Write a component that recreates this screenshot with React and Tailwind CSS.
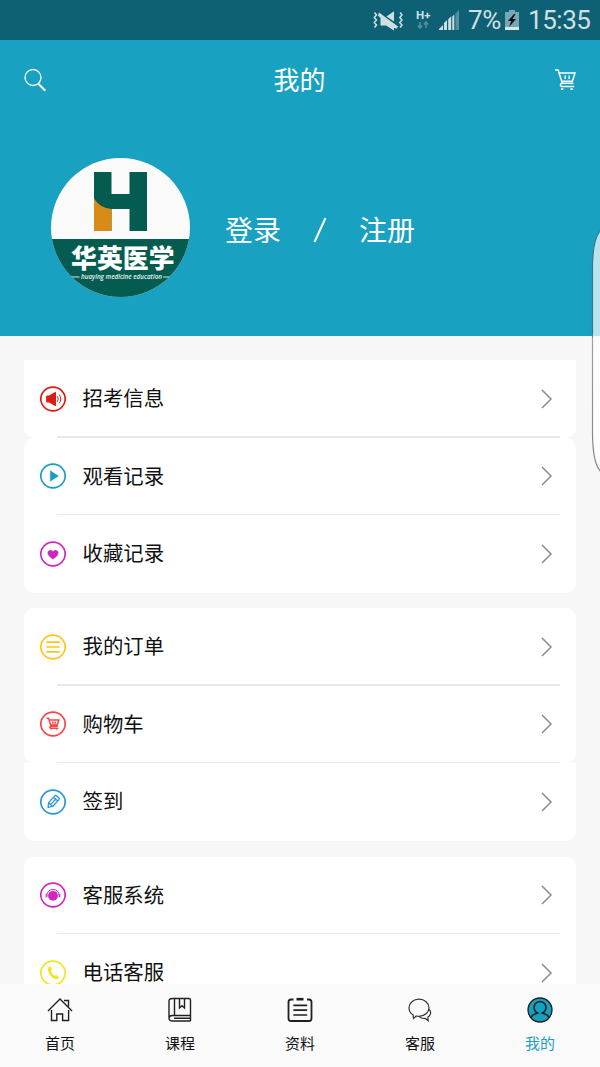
import React from "react";

const CART = (
  <>
    <path d="M1 2h3.2l4 13.2h11.2M5 5h16l-2.6 8.2H7.6M6.8 18.4h13.4M8.3 15.2c-2.3 0-2.5 3.2-.6 3.2" />
    <path d="M11.2 7.5v3.5M15.2 7.5v3.5" />
    <path d="M8.2 20.3v1.6M17.6 20.3v1.6" strokeWidth="2.4" />
  </>
);

function StatusBar() {
  return (
    <div className="flex h-10 items-center justify-end bg-[#0e6074] pr-[10px] text-[#cfe0e4]">
      <svg width="32" height="22" viewBox="0 0 32 22" className="mt-px" fill="none" stroke="currentColor">
        <path d="M2.500 2.500 4.500 5 2.200 7.500 4.500 10 2.200 12.500 4.500 15 2.500 17.500M28 2.500l2 2.500L27.800 7.500 30 10l-2.200 2.500L30 15l-2 2.500" strokeWidth="1.500" />
        <path d="M7 2.500 26 16.500l-1.500 2.300-2.500-1V20.500L14 15.500H8.500V8L6 5.500zM14.500 6.500 22 1.200v10.300z" fill="currentColor" stroke="none" />
      </svg>
      <svg width="18" height="22" viewBox="0 0 18 22" className="ml-[11px]">
        <text x="1" y="10" fontSize="11.500" fontWeight="700" fill="currentColor" fontFamily="Roboto, sans-serif" textLength="14.500" lengthAdjust="spacingAndGlyphs">H+</text>
        <path d="M5 13v6M3 16.500 5 19l2-2.500M11 19v-6M9 15.500l2-2.500 2 2.500" stroke="#559099" strokeWidth="1.600" fill="none" />
      </svg>
      <svg width="20" height="20" viewBox="0 0 20 20" className="ml-[6px]">
        <path d="M0 20v-1l4-4v5zM5 20v-7l3-3v10zM9.200 20V9.300l3-3V20zM13.300 20V6.400l2-2V20z" fill="currentColor" />
        <path d="M16.400 20V3.800L20 0v20z" fill="#568e9b" />
      </svg>
      <span className="ml-[9px] w-[31px] whitespace-nowrap font-[Roboto,sans-serif] text-[26px] leading-[40px] tracking-[-0.400px]">7%</span>
      <svg width="14" height="20" viewBox="0 0 14 20" className="ml-[6px]">
        <path d="M4 0h6v2h4v18H0V2h4z" fill="#75a8b4" />
        <path d="M0 17h14v3H0z" fill="#dbe7e9" />
        <path d="m9 4-6 7h3.300L4 17l7-8H7.500l3-5z" fill="#10100e" />
      </svg>
      <span className="ml-[9px] w-[62px] whitespace-nowrap font-[Roboto,sans-serif] text-[26px] leading-[40px] tracking-[-0.450px]">15:35</span>
    </div>
  );
}

function Logo() {
  return (
    <svg width="140" height="140" viewBox="0 0 140 140" className="shrink-0">
      <defs>
        <clipPath id="disc"><circle cx="70.500" cy="69.500" r="69.500" /></clipPath>
      </defs>
      <g clipPath="url(#disc)">
        <path d="M0 0h140v140H0z" fill="#fafafa" />
        <path d="M0 81h140v59H0z" fill="#045b50" />
        <path d="M44 14H61.500v22H79.500V14H97v59H79.500V51H61.500v22H44z" fill="#045b50" />
        <path d="M44 40.500Q50 50 61.500 51V73H44z" fill="#d98b17" />
        <path d="M20.500 119h9M113 119h7" stroke="#dce9e6" />
      </g>
      <text x="21" y="109.500" fontSize="25.800" fontWeight="900" fill="#fff" textLength="103.500" fontFamily="'Noto Sans CJK SC', sans-serif">华英医学</text>
      <text x="31" y="121" fontSize="6.300" fontWeight="600" fontStyle="italic" fill="#e9f2ef" textLength="81" fontFamily="'Open Sans', sans-serif">huaying medicine education</text>
    </svg>
  );
}

const GLYPHS = {
  speaker: (
    <>
      <path d="M6.700 10h2.300L15.500 6.300v13.400L9 16H6.700z" fill="currentColor" />
      <path d="M17.300 10.200q2 2.800 0 5.600M19.200 8.600q3.200 4.400 0 8.800" strokeWidth="1" />
    </>
  ),
  play: <path d="m10.300 7.800 8.200 5.200-8.200 5.200z" fill="currentColor" strokeWidth="0.500" />,
  heart: <path d="M13 18.200C9.500 15.700 7.800 14 7.800 12c0-3 3.800-3.600 5.200-1.200 1.400-2.400 5.200-1.800 5.200 1.200 0 2-1.700 3.700-5.200 6.200z" fill="currentColor" strokeWidth="0.400" />,
  list: <path d="M7 8.200h12M7 13h12M7 17.800h12" strokeWidth="1.700" strokeLinecap="round" />,
  cart: <g transform="translate(6 6) scale(.61)" strokeWidth="2.500">{CART}</g>,
  pencil: (
    <g transform="rotate(43 13 13)" strokeWidth="1.300" strokeLinejoin="round">
      <path d="M10.200 7.200q0-1.200 1.200-1.200h3.200q1.200 0 1.200 1.200v9.300L13 20.200l-2.800-3.700zM10.200 9h5.600M13 9v7.200M10.200 16.500h5.600" />
    </g>
  ),
  headset: (
    <>
      <circle cx="13" cy="13.800" r="4.900" fill="currentColor" stroke="none" />
      <path d="M6.800 13.300C7 5.500 19 5.500 19.200 13.300" strokeWidth="1" />
      <path d="M6.500 12.300v3M19.500 12.300v3" strokeWidth="1.700" />
    </>
  ),
  phone: <path d="M8.300 7.600c.8-1.200 2-1.200 2.500-.2l.9 2c.3.800-.8 1.400-.8 1.900.3 1.600 2 3.800 3.700 4.500.6.200 1.100-.9 1.900-.5l1.700 1.200c.9.700.3 2-.8 2.400-4.800 1.200-10.600-6.900-9.100-11.300z" fill="currentColor" strokeWidth="0.300" />,
};

function Row({ icon, color, label, divider, shape = "" }) {
  return (
    <div className={`relative flex h-[77.500px] items-center bg-white pl-4 pr-[23px] ${shape}`}>
      <svg width="26" height="26" viewBox="0 0 26 26" className={`shrink-0 ${color}`} fill="none" stroke="currentColor">
        <ellipse cx="13" cy="13" rx="12.200" ry="11.800" strokeWidth="1.700" />
        {GLYPHS[icon]}
      </svg>
      <span className="ml-[16.500px] flex-1 pb-[3px] text-[20.400px] leading-[30px] text-[#111111]">{label}</span>
      <svg width="12" height="20" viewBox="0 0 12 20" fill="none" stroke="#8b8b8b" strokeWidth="1.500">
        <path d="m1 1 9 9-9 9" />
      </svg>
      {divider && <div className="absolute bottom-0 left-[32.500px] right-4 h-[1.500px] bg-[#e9e9e9]" />}
    </div>
  );
}

const TABS = [
  {
    label: "首页",
    icon: <path d="M1 14 13 2l12 12M17 3.500h4.500v6M4.500 13v10.500h5.300V17h5.800v6.500h6V13" />,
  },
  {
    label: "课程",
    icon: (
      <>
        <path d="M5.500 1.500H22q1.500 0 1.500 1.500v15.500H5.500Q2 18.500 2 21V4q0-2.500 3.500-2.500zM2 21q0 3 3.500 3h18M23.500 18.500v5.500M7 21.300h16" />
        <path d="M7.500 2v16.500M12.500 2v9l2.500-2.300 2.500 2.300V2" />
      </>
    ),
  },
  {
    label: "资料",
    icon: (
      <>
        <path d="M6.500 2.500H4q-2.500 0-2.500 2.500v16.500Q1.500 24 4 24h18q2.500 0 2.500-2.500V5q0-2.500-2.500-2.500h-2" strokeWidth="1.800" />
        <path d="M9.500 2.200h7" strokeWidth="2.600" />
        <path d="M7 8.300h12.500M7 13.100h12.500M7 18h12.500" strokeWidth="1.700" strokeLinecap="round" />
      </>
    ),
  },
  {
    label: "客服",
    icon: (
      <g strokeWidth="1.200" stroke="#333333">
        <path d="M6.500 21.500 6.200 18C3.300 16.300 2 13.500 2 10.700 2 6 6.500 2.200 12 2.200s10 3.800 10 8.500-4.500 8.700-10 8.700q-1.500 0-2.800-.4z" />
        <path d="M22.200 12.500c2.500 2.700 1.500 5.700-1.300 7.500l.3 3.700-3-2.300c-2.200.3-4.300-.2-5.800-1.500" />
      </g>
    ),
  },
  {
    label: "我的",
    active: true,
    icon: (
      <>
        <circle cx="13" cy="13" r="12" fill="#169fbf" />
        <path d="M3.500 20.500Q5.500 17.500 10.500 16 A6 6 0 1 1 15.500 16Q20.500 17.500 22.500 20.500" strokeWidth="1.500" />
      </>
    ),
  },
];

function TabBar() {
  return (
    <nav className="relative grid h-[83px] shrink-0 grid-cols-5 bg-[#fafafa]">
      {TABS.map((t) => (
        <div key={t.label} className={`flex flex-col items-center pt-[13px] text-[15px] leading-[22px] ${t.active ? "text-[#1ba1c0]" : "text-[#111111]"}`}>
          <svg width="26" height="26" viewBox="0 0 26 26" fill="none" stroke="#202020" strokeWidth="1.400">{t.icon}</svg>
          <span className="mt-[9px]">{t.label}</span>
        </div>
      ))}
    </nav>
  );
}

export default function App() {
  return (
    <div className="relative flex h-[1067px] w-[600px] flex-col overflow-hidden bg-[#f7f7f7] font-['Noto_Sans_CJK_SC',sans-serif]">
      <StatusBar />
      <header className="h-[296px] shrink-0 bg-[#18a1c0] text-white">
        <div className="flex h-20 items-center justify-between pl-6 pr-6">
          <svg width="23" height="24" viewBox="0 0 23 24" fill="none" stroke="currentColor">
            <circle cx="9" cy="9.500" r="8" strokeWidth="1.300" />
            <path d="m14.300 15.800 7 7" strokeWidth="2.100" />
          </svg>
          <h1 className="pb-[2px] pr-[2px] text-[26px] font-normal leading-[40px]">我的</h1>
          <svg width="22" height="23" viewBox="0 0 22 23" className="mb-[2px]" fill="none" stroke="currentColor" strokeWidth="1.500">{CART}</svg>
        </div>
        <div className="flex items-center pl-[50px] pt-[38px] text-[28px] font-normal leading-[40px]">
          <Logo />
          <span className="ml-[35px] pt-px">登录</span>
          <svg width="14" height="26" viewBox="0 0 14 26" className="ml-8 mt-1" fill="none" stroke="currentColor" strokeWidth="2"><path d="M1.500 25 12.500 1" /></svg>
          <span className="ml-[32px] pt-px">注册</span>
        </div>
      </header>
      <main className="flex min-h-0 flex-1 flex-col gap-4 overflow-hidden px-6 pt-6">
        <section className="-mb-[0.500px] shrink-0">
          <Row icon="speaker" color="text-[#dc1c12]" label="招考信息" divider shape="rounded-b-[10px]" />
          <Row icon="play" color="text-[#189fbf]" label="观看记录" divider shape="rounded-t-[10px]" />
          <Row icon="heart" color="text-[#cf27bd]" label="收藏记录" shape="rounded-b-[10px]" />
        </section>
        <section className="shrink-0">
          <Row icon="list" color="text-[#fdc51c]" label="我的订单" divider shape="rounded-t-[10px]" />
          <Row icon="cart" color="text-[#f84444]" label="购物车" divider shape="rounded-b-[10px]" />
          <Row icon="pencil" color="text-[#2796da]" label="签到" shape="rounded-b-[10px]" />
        </section>
        <section className="shrink-0">
          <Row icon="headset" color="text-[#cf27bd]" label="客服系统" divider shape="rounded-t-[10px]" />
          <Row icon="phone" color="text-[#f1e51c]" label="电话客服" />
        </section>
      </main>
      <TabBar />
      <svg width="9" height="244" viewBox="0 0 9 244" className="absolute right-0 top-[229px]" fill="none">
        <defs>
          <linearGradient id="rim" x1="0" y1="0" x2="0" y2="1">
            <stop offset="0.430" stopColor="#3c7887" />
            <stop offset="0.450" stopColor="#a0a0a0" />
            <stop offset="1" stopColor="#808080" />
          </linearGradient>
        </defs>
        <path d="M10 1C4 7 1.500 21 1.500 39v164c0 20 2.500 34 8.500 40z" fill="#ffffff" fillOpacity="0.700" stroke="url(#rim)" strokeWidth="1.200" />
      </svg>
    </div>
  );
}
